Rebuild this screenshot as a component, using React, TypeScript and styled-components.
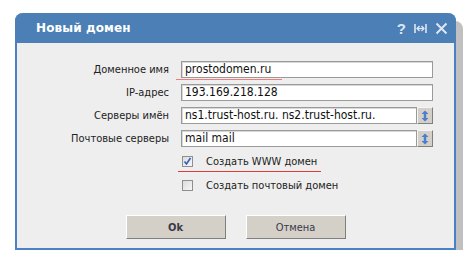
import React from 'react';
import styled, { createGlobalStyle } from 'styled-components';

const GlobalStyle = createGlobalStyle`
  html, body {
    margin: 0;
    padding: 0;
    background: #ffffff;
  }
  body {
    font-family: "DejaVu Sans", "Liberation Sans", sans-serif;
    font-stretch: condensed;
    font-size: 11px;
    color: #222;
  }
`;

const Page = styled.div`
  padding: 13px 0 0 15px;
`;

const Dialog = styled.div`
  width: 437px;
  border: 2px solid #4a80c4;
  border-top: none;
  border-radius: 8px 8px 0 0;
  box-shadow: 7px 8px 0 #c0c0c0;
  background: #eeeeee;
`;

const TitleBar = styled.div`
  height: 30px;
  display: flex;
  align-items: center;
  justify-content: space-between;
  padding: 0 8px 0 21px;
  margin: 0 -2px;
  background: #4b7fb6;
  border-radius: 8px 8px 0 0;
`;

const Title = styled.div`
  color: #ffffff;
  font-family: "DejaVu Sans", sans-serif;
  font-stretch: normal;
  font-weight: bold;
  font-size: 12px;
  letter-spacing: 0.1px;
`;

const TitleTools = styled.div`
  display: flex;
  align-items: center;
  gap: 8px;
  color: #dde7f2;
`;

const HelpMark = styled.span`
  font-family: "Liberation Sans", sans-serif;
  font-weight: bold;
  font-size: 15px;
  line-height: 1;
`;

const Body = styled.div`
  padding: 18px 0 9px;
`;

const FormGrid = styled.div`
  display: grid;
  grid-template-columns: 152px 252px;
  column-gap: 12px;
  row-gap: 6px;
`;

const Label = styled.div`
  text-align: right;
  line-height: 17px;
  font-size: 11px;
  white-space: nowrap;
`;

const Field = styled.div<{ $marked?: boolean }>`
  position: relative;
  display: flex;
  height: 17px;

  ${(p) =>
    p.$marked &&
    `
    &::after {
      content: '';
      position: absolute;
      left: -5px;
      top: 18px;
      width: 106px;
      height: 1px;
      background: #f27c7c;
    }
  `}
`;

const TextBox = styled.div`
  flex: 1;
  box-sizing: border-box;
  height: 17px;
  border: 1px solid #9a9a9a;
  box-shadow: inset 1px 1px 0 #d8d8d8;
  background: #ffffff;
  padding: 0 3px;
  font-size: 12px;
  line-height: 15px;
  white-space: nowrap;
  overflow: hidden;
  color: #111;
`;

const SpinButton = styled.div`
  width: 16px;
  box-sizing: border-box;
  height: 17px;
  background: #d4d0c8;
  border: 1px solid;
  border-color: #f4f4f4 #808080 #808080 #f4f4f4;
  display: flex;
  align-items: center;
  justify-content: center;
`;

const Options = styled.div`
  margin: 5px 0 0 161px;
  display: flex;
  flex-direction: column;
  gap: 4px;
`;

const CheckRow = styled.label<{ $underlined?: boolean }>`
  display: flex;
  align-items: center;
  gap: 13px;
  height: 20px;
  padding-left: 4px;
  width: ${(p) => (p.$underlined ? '143px' : 'auto')};
  border-bottom: 1px solid ${(p) => (p.$underlined ? '#e23a3a' : 'transparent')};
  box-sizing: border-box;
  font-size: 11px;
  white-space: nowrap;
`;

const Box = styled.span`
  width: 11px;
  height: 11px;
  box-sizing: border-box;
  border: 1px solid #8f8f8f;
  background: linear-gradient(135deg, #dcdcdc, #f6f6f6);
  display: flex;
  align-items: center;
  justify-content: center;
`;

const Buttons = styled.div`
  display: flex;
  justify-content: center;
  gap: 20px;
  margin-top: 19px;
`;

const Button = styled.div<{ $primary?: boolean }>`
  width: 100px;
  height: 24px;
  box-sizing: border-box;
  background: #d4d0c8;
  border: 1px solid;
  border-color: #ffffff #808080 #808080 #ffffff;
  display: flex;
  align-items: center;
  justify-content: center;
  font-size: 11px;
  font-weight: ${(p) => (p.$primary ? 'bold' : 'normal')};
  color: #3a3a48;
`;

const FitIcon = () => (
  <svg width="13" height="11" viewBox="0 0 13 11">
    <path d="M1 1v9M12 1v9" stroke="#dde7f2" strokeWidth="1.6" fill="none" />
    <path d="M3 5.5h7" stroke="#dde7f2" strokeWidth="1.4" />
    <path d="M5.5 3L3 5.5 5.5 8M7.5 3L10 5.5 7.5 8" stroke="#dde7f2" strokeWidth="1.3" fill="none" />
  </svg>
);

const CloseIcon = () => (
  <svg width="13" height="13" viewBox="0 0 13 13">
    <path d="M1.5 1.5l10 10M11.5 1.5l-10 10" stroke="#dde7f2" strokeWidth="2" />
  </svg>
);

const SpinIcon = () => (
  <svg width="8" height="12" viewBox="0 0 8 12">
    <path d="M4 0.5L7.5 4H5.2v4h2.3L4 11.5 0.5 8h2.3V4H0.5z" fill="#4a7fd0" />
  </svg>
);

const CheckMark = () => (
  <svg width="9" height="9" viewBox="0 0 9 9">
    <path d="M1.5 4.5l2 2.5 4-6" stroke="#2f5fb8" strokeWidth="1.6" fill="none" />
  </svg>
);

const rows = [
  { label: 'Доменное имя', value: 'prostodomen.ru', marked: true },
  { label: 'IP-адрес', value: '193.169.218.128' },
  { label: 'Серверы имён', value: 'ns1.trust-host.ru. ns2.trust-host.ru.', spin: true },
  { label: 'Почтовые серверы', value: 'mail mail', spin: true },
];

const App: React.FC = () => {
  return (
    <>
      <GlobalStyle />
      <Page>
        <Dialog>
          <TitleBar>
            <Title>Новый домен</Title>
            <TitleTools>
              <HelpMark>?</HelpMark>
              <FitIcon />
              <CloseIcon />
            </TitleTools>
          </TitleBar>
          <Body>
            <FormGrid>
              {rows.map((r) => (
                <React.Fragment key={r.label}>
                  <Label>{r.label}</Label>
                  <Field $marked={r.marked}>
                    <TextBox>{r.value}</TextBox>
                    {r.spin && (
                      <SpinButton>
                        <SpinIcon />
                      </SpinButton>
                    )}
                  </Field>
                </React.Fragment>
              ))}
            </FormGrid>
            <Options>
              <CheckRow $underlined>
                <Box>
                  <CheckMark />
                </Box>
                Создать WWW домен
              </CheckRow>
              <CheckRow>
                <Box />
                Создать почтовый домен
              </CheckRow>
            </Options>
            <Buttons>
              <Button $primary>Ok</Button>
              <Button>Отмена</Button>
            </Buttons>
          </Body>
        </Dialog>
      </Page>
    </>
  );
};

export default App;
